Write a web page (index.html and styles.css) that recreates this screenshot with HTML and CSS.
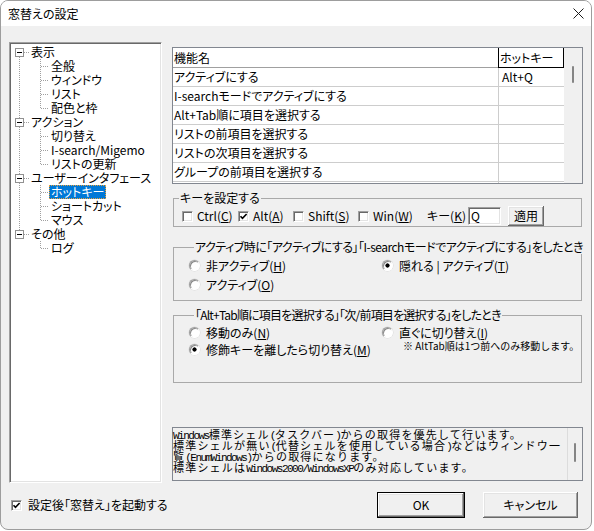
FILE: index.html
```html
<!DOCTYPE html>
<html lang="ja">
<head>
<meta charset="utf-8">
<title>窓替えの設定</title>
<link rel="stylesheet" href="styles.css">
</head>
<body>
<div class="window">
  <div class="titlebar">
    <span class="title">窓替えの設定</span>
    <svg class="close" width="11" height="11" viewBox="0 0 11 11"><path d="M0.5 0.5L10.5 10.5M10.5 0.5L0.5 10.5" stroke="#1a1a1a" stroke-width="1" fill="none"/></svg>
  </div>
  <div class="client">
    <div class="main">
      <div class="tree">
        <div class="row root first"><span class="exp"></span><span class="t">表示</span></div>
        <div class="row kid"><span class="t">全般</span></div>
        <div class="row kid"><span class="t">ウィンドウ</span></div>
        <div class="row kid"><span class="t">リスト</span></div>
        <div class="row kid end"><span class="t">配色と枠</span></div>
        <div class="row root"><span class="exp"></span><span class="t">アクション</span></div>
        <div class="row kid"><span class="t">切り替え</span></div>
        <div class="row kid"><span class="t">I-search/Migemo</span></div>
        <div class="row kid end"><span class="t">リストの更新</span></div>
        <div class="row root"><span class="exp"></span><span class="t">ユーザーインタフェース</span></div>
        <div class="row kid sel"><span class="t">ホットキー</span></div>
        <div class="row kid"><span class="t">ショートカット</span></div>
        <div class="row kid end"><span class="t">マウス</span></div>
        <div class="row root last"><span class="exp"></span><span class="t">その他</span></div>
        <div class="row kid end solo"><span class="t">ログ</span></div>
      </div>

      <div class="right">
        <div class="list">
          <div class="lv">
            <div class="lv-head"><div class="h1">機能名</div><div class="h2">ホットキー</div></div>
            <div class="lv-row"><div class="c1">アクティブにする</div><div class="c2">Alt+Q</div></div>
            <div class="lv-row"><div class="c1">I-searchモードでアクティブにする</div><div class="c2"></div></div>
            <div class="lv-row"><div class="c1">Alt+Tab順に項目を選択する</div><div class="c2"></div></div>
            <div class="lv-row"><div class="c1">リストの前項目を選択する</div><div class="c2"></div></div>
            <div class="lv-row"><div class="c1">リストの次項目を選択する</div><div class="c2"></div></div>
            <div class="lv-row"><div class="c1">グループの前項目を選択する</div><div class="c2"></div></div>
            <div class="lv-row"><div class="c1">グループの次項目を選択する</div><div class="c2"></div></div>
          </div>
          <div class="vscroll"><span class="thumb"></span></div>
        </div>

        <fieldset class="grp g1">
          <legend>キーを設定する</legend>
          <div class="keyrow">
            <span class="cb"><span class="ck"></span>Ctrl(<u>C</u>)</span>
            <span class="cb"><span class="ck"><svg width="9" height="9" viewBox="0 0 9 9"><path d="M1.5 4.2L3.5 6.4L7.6 2" stroke="#000" stroke-width="1.6" fill="none"/></svg></span>Alt(<u>A</u>)</span>
            <span class="cb"><span class="ck"></span>Shift(<u>S</u>)</span>
            <span class="cb"><span class="ck"></span>Win(<u>W</u>)</span>
            <span class="klabel">キー(<u>K</u>)</span>
            <span class="inp">Q</span>
            <span class="sbtn">適用</span>
          </div>
        </fieldset>

        <fieldset class="grp g2">
          <legend class="tight">アクティブ時に「アクティブにする」「I-searchモードでアクティブにする」をしたとき</legend>
          <div class="radios">
            <span class="rb"><span class="rd"></span>非アクティブ(<u>H</u>)</span>
            <span class="rb"><span class="rd on"></span>隠れる | アクティブ(<u>T</u>)</span>
            <span class="rb"><span class="rd"></span>アクティブ(<u>O</u>)</span>
          </div>
        </fieldset>

        <fieldset class="grp g3">
          <legend class="tighter">「Alt+Tab順に項目を選択する」「次/前項目を選択する」をしたとき</legend>
          <div class="cols">
            <div class="col1">
              <span class="rb r17"><span class="rd"></span>移動のみ(<u>N</u>)</span>
              <span class="rb r17"><span class="rd on"></span>修飾キーを離したら切り替え(<u>M</u>)</span>
            </div>
            <div class="col2">
              <span class="rb r17"><span class="rd"></span>直ぐに切り替え(<u>I</u>)</span>
              <span class="note">※ AltTab順は1つ前へのみ移動します。</span>
            </div>
          </div>
        </fieldset>

        <div class="desc">
          <div class="desc-text"><span class="m">Windows</span>標準シェル<span class="m">(</span>タスクバー<span class="m">)</span>からの取得を優先して行います。<br>標準シェルが無い<span class="m">(</span>代替シェルを使用している場合<span class="m">)</span>などはウィンドウ一<br>覧<span class="m">(EnumWindows)</span>からの取得になります。<br>標準シェルは<span class="m">Windows2000/WindowsXP</span>のみ対応しています。</div>
          <div class="desc-scroll"><span class="thumb t2"></span></div>
        </div>
      </div>
    </div>

    <div class="bottom">
      <span class="cb start"><span class="ck"><svg width="9" height="9" viewBox="0 0 9 9"><path d="M1.5 4.2L3.5 6.4L7.6 2" stroke="#000" stroke-width="1.6" fill="none"/></svg></span>設定後「窓替え」を起動する</span>
      <button class="btn ok">OK</button>
      <button class="btn cancel">キャンセル</button>
    </div>
  </div>
</div>
</body>
</html>
```

FILE: styles.css
```css
* { box-sizing: border-box; }
:root {
  --v: repeating-linear-gradient(#a0a0a0 0 1px, transparent 1px 2px);
  --h: repeating-linear-gradient(90deg, #a0a0a0 0 1px, transparent 1px 2px);
}
html, body { margin: 0; background: #fff; }
body {
  font-family: "Noto Sans CJK JP", "Noto Sans", sans-serif;
  font-size: 12px;
  line-height: 14px;
  color: #000;
  font-feature-settings: "palt" 1;
}
u { text-decoration: underline; text-underline-offset: 1px; }

.window {
  width: 592px;
  height: 530px;
  border: 1px solid #9d9d9d;
  border-radius: 8px;
  background: #f0f0f0;
  overflow: hidden;
  display: flex;
  flex-direction: column;
}
.titlebar {
  height: 25px;
  flex: none;
  background: #fff;
  display: flex;
  align-items: center;
  justify-content: space-between;
  padding: 0 7px 0 7px;
}
.close { display: block; }

.client {
  flex: 1;
  padding: 16px 8px 0 8px;
  display: flex;
  flex-direction: column;
}
.main {
  display: grid;
  grid-template-columns: 153px 411px;
  column-gap: 10px;
}

/* tree */
.tree {
  height: 441px;
  background: #fff;
  border: 1px solid;
  border-color: #a0a0a0 #fff #fff #a0a0a0;
  box-shadow: inset 1px 1px #696969, inset -1px -1px #e3e3e3;
  padding: 2px 0 0 1px;
}
.row {
  height: 14px;
  display: flex;
  align-items: center;
  white-space: nowrap;
}
.exp {
  width: 9px;
  height: 9px;
  margin-left: 4px;
  margin-right: 7px;
  border: 1px solid #919191;
  background: linear-gradient(#000, #000) center / 5px 1px no-repeat #fff;
}
.root .t { line-height: 14px; }
.kid .t { margin-left: 38px; padding: 0 2px; height: 14px; line-height: 14px; }
.sel .t {
  background: #0078d7;
  color: #fff;
  outline: 1px dotted #e9a13b;
  outline-offset: -1px;
}
.root { background: var(--h) 13px 7px / 6px 1px no-repeat, var(--v) 8px 0 / 1px 14px no-repeat; }
.root.first { background: var(--h) 13px 7px / 6px 1px no-repeat, var(--v) 8px 8px / 1px 6px no-repeat; }
.root.last { background: var(--h) 13px 7px / 6px 1px no-repeat, var(--v) 8px 0 / 1px 7px no-repeat; }
.kid { background: var(--h) 30px 7px / 8px 1px no-repeat, var(--v) 29px 0 / 1px 14px no-repeat, var(--v) 8px 0 / 1px 14px no-repeat; }
.kid.end { background: var(--h) 30px 7px / 8px 1px no-repeat, var(--v) 29px 0 / 1px 8px no-repeat, var(--v) 8px 0 / 1px 14px no-repeat; }
.kid.end.solo { background: var(--h) 30px 7px / 8px 1px no-repeat, var(--v) 29px 0 / 1px 8px no-repeat; }

/* right column */
.right {
  padding-top: 5px;
  display: flex;
  flex-direction: column;
}
.list {
  height: 137px;
  border: 1px solid #828790;
  background: #fff;
  display: flex;
  flex: none;
}
.lv { flex: 1; overflow: hidden; }
.lv-head, .lv-row { display: flex; white-space: nowrap; }
.lv-head { height: 20px; }
.h1 { width: 325px; border-bottom: 1px solid #a0a0a0; padding-left: 1px; line-height: 19px; }
.h2 { width: 66px; border: 1px solid #000; border-top: 0; padding-left: 1px; line-height: 19px; }
.lv-row { height: 19px; border-bottom: 1px solid #cdcdcd; }
.c1 { width: 325px; padding-left: 1px; line-height: 18px; }
.c2 { width: 66px; border-left: 1px solid #cdcdcd; padding-left: 3px; line-height: 18px; }
.vscroll {
  width: 18px;
  background: #f0f0f0;
  display: flex;
  justify-content: center;
  align-items: flex-start;
  padding-top: 18px;
}
.thumb { display: block; width: 2px; height: 17px; background: #858585; border-radius: 1px; }
.t2 { height: 19px; }

/* group boxes */
.grp {
  margin: 0 1px;
  padding: 0;
  border: 1px solid #a9a9a9;
  min-width: 0;
  flex: none;
}
.grp legend {
  padding: 0 1px;
  margin-left: 5px;
  line-height: 14px;
  white-space: nowrap;
}
.grp legend.tight { letter-spacing: -0.5px; }
.grp legend.tighter { letter-spacing: -0.8px; }
.g1 { margin-top: 7px; }
.g2 { margin-top: 13px; padding: 2px 0 6px 15px; }
.g3 { margin-top: 7px; padding: 2px 0 24px 15px; }

.keyrow {
  display: grid;
  grid-template-columns: 56px 55px 65px 69px 41px 40px 36px;
  align-items: center;
  height: 21px;
  padding: 1px 0 0 8px;
  white-space: nowrap;
}
.cb { display: flex; align-items: center; white-space: nowrap; }
.ck {
  width: 11px;
  height: 11px;
  flex: none;
  margin-right: 4px;
  background: #fff;
  border: 1px solid;
  border-color: #a0a0a0 #fff #fff #a0a0a0;
  box-shadow: inset 1px 1px #696969, inset -1px -1px #e3e3e3;
  display: flex;
  align-items: center;
  justify-content: center;
}
.ck svg { display: block; }
.klabel { white-space: nowrap; }
.inp {
  width: 33px;
  height: 18px;
  background: #fff;
  border: 1px solid;
  border-color: #a0a0a0 #fff #fff #a0a0a0;
  box-shadow: inset 1px 1px #696969, inset -1px -1px #e3e3e3;
  padding-left: 2px;
  line-height: 16px;
}
.sbtn {
  width: 36px;
  height: 20px;
  background: #f0f0f0;
  box-shadow: inset -1px -1px #696969, inset 1px 1px #fff, inset -2px -2px #a0a0a0, inset 2px 2px #e3e3e3;
  text-align: center;
  line-height: 20px;
}

.radios {
  display: grid;
  grid-template-columns: 193px auto;
  grid-auto-rows: 19px;
  align-items: center;
}
.rb { display: flex; align-items: center; white-space: nowrap; }
.r17 { height: 17px; }
.rd {
  width: 11px;
  height: 11px;
  flex: none;
  margin-right: 6px;
  border-radius: 50%;
  border: 1px solid;
  border-color: #a0a0a0 #fff #fff #a0a0a0;
  background: #fff;
  box-shadow: inset 1px 1px #8a8a8a, 0 0 0 0.5px #d8d8d8;
}
.rd.on { background: radial-gradient(circle, #000 0 1.8px, #fff 2.4px); }
.cols { display: flex; }
.col1 { width: 193px; display: flex; flex-direction: column; }
.col2 { display: flex; flex-direction: column; }
.note {
  padding-left: 21px;
  font-size: 10px;
  line-height: 12px;
  margin-top: -1px;
  font-feature-settings: normal;
  white-space: nowrap;
}

/* description */
.desc {
  margin-top: 44px;
  height: 54px;
  border: 1px solid #828790;
  display: flex;
  flex: none;
}
.desc-text {
  flex: 1;
  min-width: 0;
  padding: 1px 0 0 0;
  font-size: 11px;
  line-height: 11px;
  font-feature-settings: normal;
  letter-spacing: 1.2px;
  white-space: nowrap;
}
.desc-text .m {
  font-family: "Liberation Mono", monospace;
  font-size: 11px;
  letter-spacing: -1.5px;
  line-height: 0;
}
.desc-scroll {
  width: 15px;
  flex: none;
  border-left: 1px solid #dcdcdc;
  display: flex;
  justify-content: center;
  align-items: flex-start;
  padding-top: 15px;
}

/* bottom */
.bottom {
  display: flex;
  align-items: center;
  height: 26px;
  margin-top: 9px;
}
.start { margin-left: 2px; }
.start .ck { margin-right: 6px; }
.btn {
  height: 26px;
  padding: 0;
  font: inherit;
  color: #000;
  background: #f0f0f0;
  border: 0;
  box-shadow: inset -1px -1px #696969, inset 1px 1px #fff, inset -2px -2px #a0a0a0, inset 2px 2px #e3e3e3;
}
.ok {
  width: 88px;
  margin-left: auto;
  border: 1px solid #000;
}
.cancel { width: 95px; margin-left: 18px; margin-right: 5px; }
```
